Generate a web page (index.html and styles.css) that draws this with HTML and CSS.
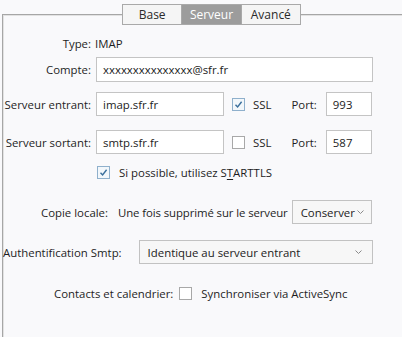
FILE: index.html
```html
<!DOCTYPE html>
<html lang="fr">
<head>
  <meta charset="UTF-8">
  <title>Serveur</title>
  <link rel="stylesheet" href="styles.css">
</head>
<body>
  <div class="tabs">
    <span class="tab">Base</span>
    <span class="tab active">Serveur</span>
    <span class="tab">Avancé</span>
  </div>
  <div class="panel">
    <div class="row row-type">
      <span class="lbl">Type:</span>
      <span class="val">IMAP</span>
    </div>
    <div class="row row-account">
      <span class="lbl">Compte:</span>
      <div class="field wide">xxxxxxxxxxxxxxx@sfr.fr</div>
    </div>
    <div class="row row-in">
      <span class="lbl">Serveur entrant:</span>
      <div class="field host">imap.sfr.fr</div>
      <span class="check on"><svg viewBox="0 0 11 11" width="11" height="11"><path d="M2.5 5.8 L4.6 8 L8.6 2.8" fill="none" stroke="#3a6f9c" stroke-width="1.4"/></svg></span>
      <span class="ssl">SSL</span>
      <span class="port">Port:</span>
      <div class="field portf">993</div>
    </div>
    <div class="row row-out">
      <span class="lbl">Serveur sortant:</span>
      <div class="field host">smtp.sfr.fr</div>
      <span class="check"></span>
      <span class="ssl">SSL</span>
      <span class="port">Port:</span>
      <div class="field portf">587</div>
    </div>
    <div class="row row-tls">
      <span class="check on"><svg viewBox="0 0 11 11" width="11" height="11"><path d="M2.5 5.8 L4.6 8 L8.6 2.8" fill="none" stroke="#3a6f9c" stroke-width="1.4"/></svg></span>
      <span class="tls-text">Si possible, utilisez S<u>T</u>ARTTLS</span>
    </div>
    <div class="row row-copy">
      <span class="copy-lbl">Copie locale:</span>
      <span class="copy-text">Une fois supprimé sur le serveur</span>
      <div class="select keep">Conserver<svg class="chev" viewBox="0 0 7 4" width="7" height="4"><path d="M0.5 0.5 L3.5 3.5 L6.5 0.5" fill="none" stroke="#8a8a8a" stroke-width="1"/></svg></div>
    </div>
    <div class="row row-auth">
      <span class="auth-lbl">Authentification Smtp:</span>
      <div class="select auth">Identique au serveur entrant<svg class="chev" viewBox="0 0 7 4" width="7" height="4"><path d="M0.5 0.5 L3.5 3.5 L6.5 0.5" fill="none" stroke="#8a8a8a" stroke-width="1"/></svg></div>
    </div>
    <div class="row row-sync">
      <span class="sync-lbl">Contacts et calendrier:</span>
      <span class="check"></span>
      <span class="sync-text">Synchroniser via ActiveSync</span>
    </div>
  </div>
</body>
</html>
```

FILE: styles.css
```css
* {
  margin: 0;
  padding: 0;
  box-sizing: border-box;
}

body {
  font-family: 'Open Sans', 'Noto Sans', sans-serif;
  font-size: 11.4px;
  color: #1e1e1e;
  background: #f9f9fb;
  width: 402px;
  height: 337px;
  overflow: hidden;
  white-space: nowrap;
}

.tabs {
  position: relative;
  z-index: 1;
  display: flex;
  margin: 4px 0 -11px 122px;
  width: 179px;
  height: 21px;
  border: 1px solid #a9a9a9;
  background: #f5f5f5;
  font-size: 12px;
}

.tab {
  width: 59px;
  display: flex;
  align-items: center;
  justify-content: center;
  color: #2a2a2a;
}

.tab.active {
  width: 61px;
  background: #9c9c9c;
  color: #fff;
  border-left: 1px solid #a9a9a9;
  border-right: 1px solid #a9a9a9;
}

.panel {
  margin-left: 2px;
  height: 330px;
  border-top: 1px solid #a6a6a6;
  border-left: 1px solid #a6a6a6;
  box-shadow: inset 1px 1px 0 #e2e2e2;
}

.row {
  display: flex;
  align-items: center;
}

.row > * { flex: none; }

.lbl {
  width: 88px;
  text-align: right;
  margin-right: 5px;
}

.row-type { margin-top: 20px; height: 16px; }
.row-type .val { margin-left: -1px; }
.row-account { margin-top: 6px; height: 25px; }
.row-in { margin-top: 10px; height: 24px; }
.row-out { margin-top: 14px; height: 24px; }
.row-tls { margin-top: 10px; height: 16px; padding-left: 94px; }
.row-copy { margin-top: 20px; height: 24px; padding-left: 38px; }
.row-auth { margin-top: 16px; height: 24px; }
.row-sync { margin-top: 20px; height: 18px; padding-left: 51px; }

.field {
  height: 100%;
  background: #fff;
  border: 1px solid #c4c4c4;
  padding: 0 6px;
  display: flex;
  align-items: center;
  color: #222;
}

.wide { width: 277px; }
.host { width: 128px; }
.portf { width: 46px; }

.check {
  width: 13px;
  height: 13px;
  border: 1px solid #a8a8a8;
  background: #fff;
  display: flex;
  align-items: center;
  justify-content: center;
}

.check.on {
  border-color: #8fb0cc;
  background: #f2f7fb;
}

.row-in .check,
.row-out .check { margin-left: 8px; }

.ssl { margin-left: 8px; }
.port { margin-left: 20px; margin-right: 9px; }

.tls-text { margin-left: 9px; }
.tls-text u { text-underline-offset: 2px; }

.copy-text { margin-left: 10px; letter-spacing: -0.1px; }

.select {
  height: 100%;
  border: 1px solid #c2c2c2;
  background: #f7f7f7;
  display: flex;
  align-items: center;
  justify-content: space-between;
  padding: 0 8px;
  color: #222;
}

.keep { width: 80px; margin-left: 4px; padding: 0 7px 0 8px; }
.auth { width: 234px; margin-left: 17px; padding: 0 10px 0 8px; }

.chev { flex: none; }

.sync-lbl { margin-right: 6px; }
.sync-text { margin-left: 9px; }
```
